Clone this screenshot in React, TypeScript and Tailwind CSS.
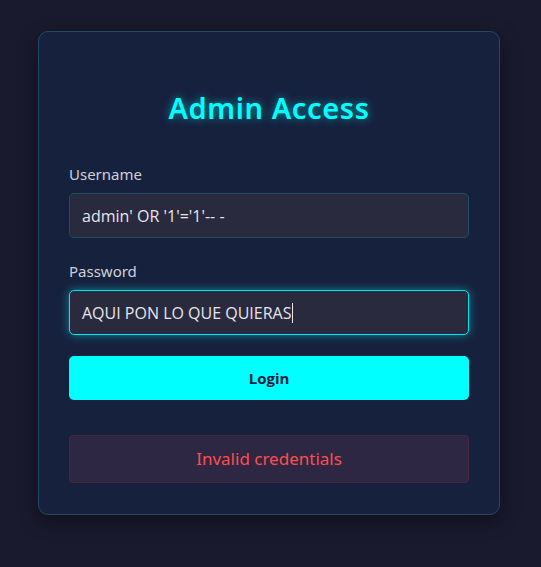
import React from "react";

export default function App() {
  return (
    <div className="min-h-[567px] w-full bg-[#1a1a2e] pt-[31px]" style={{ fontFamily: "'Noto Sans', sans-serif" }}>
      <div className="ml-[38px] w-[462px] rounded-[10px] border border-[#1f4a66] bg-[#16213e] px-[30px] pb-[31px] pt-[56px] shadow-[0_6px_20px_rgba(0,0,0,0.45)]">
        <h2 className="mb-[36px] text-center text-[29px] font-semibold leading-[40px] tracking-[0.6px] text-[#00ffff] [text-shadow:0_0_8px_rgba(0,255,255,0.55)]">
          Admin Access
        </h2>
        <div className="flex flex-col">
          <label className="mb-[9px] text-[15px] leading-[20px] text-[#d0d0d8]">Username</label>
          <div className="flex h-[45px] items-center rounded-[5px] border border-[#1f4f5e] bg-[#2a2a3e] px-[12px] text-[16px] text-[#e6e6ea]" style={{ fontFamily: "'Open Sans', sans-serif" }}>
            admin' OR '1'='1'-- -
          </div>
          <label className="mb-[9px] mt-[23px] text-[15px] leading-[20px] text-[#d0d0d8]">Password</label>
          <div className="flex h-[45px] items-center rounded-[5px] border border-[#00e5ee] bg-[#2a2a3e] px-[12px] text-[16px] text-[#e6e6ea] shadow-[0_0_10px_rgba(0,255,255,0.45)]" style={{ fontFamily: "'Open Sans', sans-serif" }}>
            AQUI PON LO QUE QUIERAS<span className="ml-px inline-block h-[20px] w-px bg-[#e6e6ea]" />
          </div>
          <button className="mt-[21px] flex h-[44px] items-center justify-center rounded-[5px] bg-[#00ffff] text-[15px] font-bold text-[#16213e]" style={{ fontFamily: "'Open Sans', sans-serif" }}>
            Login
          </button>
          <div className="mt-[35px] flex h-[48px] items-center justify-center rounded-[4px] border border-[#4a2540] bg-[#2e2744] text-[17px] text-[#ff4d4d]">
            Invalid credentials
          </div>
        </div>
      </div>
    </div>
  );
}
